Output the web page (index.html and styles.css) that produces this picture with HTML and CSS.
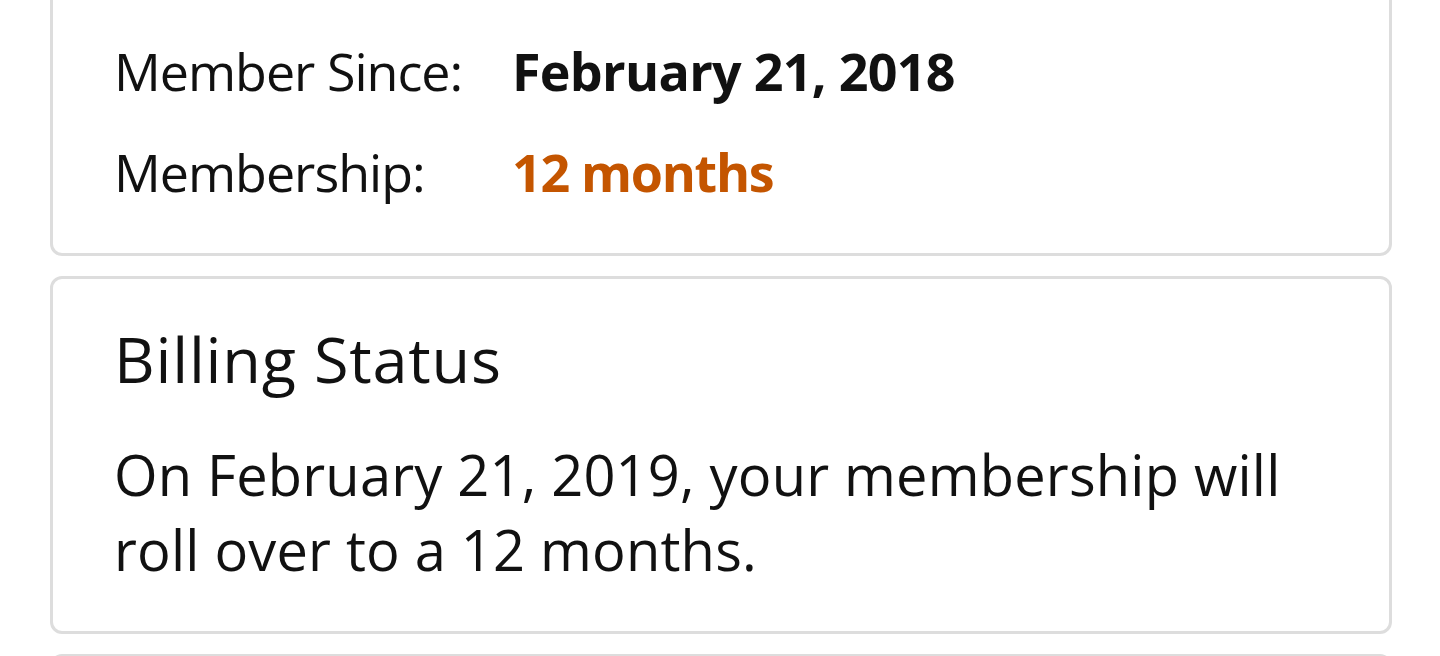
FILE: index.html
```html
<!DOCTYPE html>
<html lang="en">
<head>
<meta charset="utf-8">
<title>Membership</title>
<link rel="stylesheet" href="styles.css">
</head>
<body>
<main class="page">
  <section class="card card-first">
    <div class="row">
      <span class="label">Member Since:</span>
      <span class="value">February 21, 2018</span>
    </div>
    <div class="row">
      <span class="label">Membership:</span>
      <span class="value value-accent">12 months</span>
    </div>
  </section>
  <section class="card card-billing">
    <h2 class="card-title">Billing Status</h2>
    <p class="card-text">On February 21, 2019, your membership will roll over to a 12 months.</p>
  </section>
  <section class="card card-next"></section>
</main>
</body>
</html>
```
FILE: styles.css
```css
html, body {
  margin: 0;
  padding: 0;
  background: #ffffff;
}
body {
  font-family: "Open Sans", "Noto Sans", "Liberation Sans", sans-serif;
  color: #111111;
  overflow: hidden;
}
.page {
  display: flex;
  flex-direction: column;
  gap: 20px;
  padding: 0 48px 0 50px;
  margin-top: -12px;
}
.card {
  border: 3px solid #dddddd;
  border-radius: 12px;
  padding: 0 61px;
  background: #ffffff;
}
.card-first {
  padding-top: 29px;
  padding-bottom: 31px;
}
.row {
  display: flex;
  font-size: 52px;
  line-height: 101px;
  letter-spacing: -1px;
}
.label {
  width: 398px;
  flex: none;
}
.value {
  font-weight: 700;
  letter-spacing: -0.7px;
}
.value-accent {
  color: #c45500;
  letter-spacing: -1.3px;
}
.card-billing {
  padding-top: 40px;
  padding-bottom: 44px;
}
.card-title {
  margin: 0 0 38px;
  font-size: 63px;
  line-height: 80px;
  font-weight: 400;
  letter-spacing: 0.8px;
}
.card-text {
  margin: 0;
  font-size: 56px;
  line-height: 75px;
  letter-spacing: 0.2px;
}
.card-next {
  height: 100px;
}
```
